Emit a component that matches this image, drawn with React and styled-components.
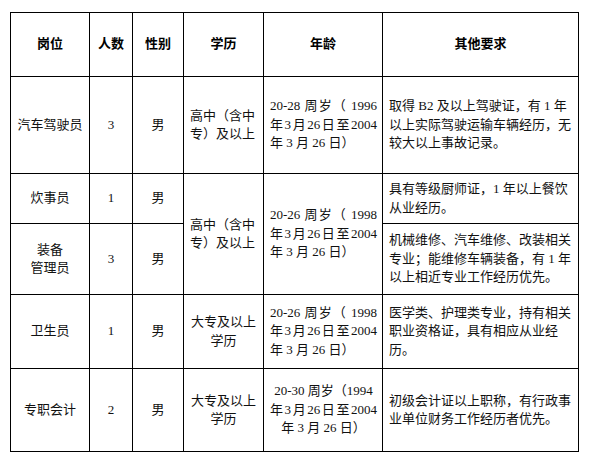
import React from "react";
import styled, { createGlobalStyle } from "styled-components";

const GlobalStyle = createGlobalStyle`
  html, body {
    margin: 0;
    padding: 0;
    background: #fff;
  }
  body {
    font-family: "Liberation Serif", "Noto Sans CJK SC", serif;
    color: #111;
  }
`;

const Page = styled.div`
  padding: 12px 0 0 10px;
`;

const Table = styled.table`
  border-collapse: collapse;
  table-layout: fixed;
  width: 569px;
  font-size: 13px;
  line-height: 18.5px;
`;

const Row = styled.tr`
  height: ${(p) => p.$h}px;
`;

const Head = styled.th`
  border: 1px solid #000;
  font-weight: bold;
  text-align: center;
  vertical-align: middle;
  padding: 0;
  color: #000;
`;

const Cell = styled.td`
  border: 1px solid #000;
  vertical-align: middle;
  text-align: ${(p) => p.$align || "center"};
  padding: 0 ${(p) => (p.$align === "left" ? "6px" : "2px")};
  white-space: nowrap;
`;

const AgeCell = styled(Cell)`
  padding: 0 5px 0 6px;
`;

const Line = styled.span`
  display: block;
  text-align: ${(p) => (p.$just ? "justify" : "inherit")};
  text-align-last: ${(p) => (p.$just ? "justify" : "auto")};
`;

const cols = [79, 43, 51, 80, 119, 196];

function Lines({ items, just = [] }) {
  return items.map((t, i) => (
    <Line key={i} $just={just.includes(i)}>
      {t}
    </Line>
  ));
}

function Age({ from, born, center, rowSpan }) {
  return (
    <AgeCell $align={center ? "center" : "left"} rowSpan={rowSpan}>
      <Lines
        items={[`20-${from} 周岁（${center ? "" : " "}${born}`, "年3月26日至2004", "年 3 月 26 日）"]}
        just={center ? [1] : [0, 1]}
      />
    </AgeCell>
  );
}

export default function App() {
  return (
    <Page>
      <GlobalStyle />
      <Table>
        <colgroup>
          {cols.map((w, i) => (
            <col key={i} style={{ width: w }} />
          ))}
        </colgroup>
        <tbody>
          <Row $h={64}>
            <Head>岗位</Head>
            <Head>人数</Head>
            <Head>性别</Head>
            <Head>学历</Head>
            <Head>年龄</Head>
            <Head>其他要求</Head>
          </Row>
          <Row $h={97}>
            <Cell>汽车驾驶员</Cell>
            <Cell>3</Cell>
            <Cell>男</Cell>
            <Cell $align="left">
              <Lines items={["高中（含中", "专）及以上"]} />
            </Cell>
            <Age from="28" born="1996" />
            <Cell $align="left">
              <Lines
                items={[
                  "取得 B2 及以上驾驶证，有 1 年",
                  "以上实际驾驶运输车辆经历，无",
                  "较大以上事故记录。",
                ]}
              />
            </Cell>
          </Row>
          <Row $h={50}>
            <Cell>炊事员</Cell>
            <Cell>1</Cell>
            <Cell>男</Cell>
            <Cell $align="left" rowSpan={2}>
              <Lines items={["高中（含中", "专）及以上"]} />
            </Cell>
            <Age from="26" born="1998" rowSpan={2} />
            <Cell $align="left">
              <Lines items={["具有等级厨师证，1 年以上餐饮", "从业经历。"]} />
            </Cell>
          </Row>
          <Row $h={71}>
            <Cell>
              <Lines items={["装备", "管理员"]} />
            </Cell>
            <Cell>3</Cell>
            <Cell>男</Cell>
            <Cell $align="left">
              <Lines
                items={[
                  "机械维修、汽车维修、改装相关",
                  "专业；能维修车辆装备，有 1 年",
                  "以上相近专业工作经历优先。",
                ]}
              />
            </Cell>
          </Row>
          <Row $h={74}>
            <Cell>卫生员</Cell>
            <Cell>1</Cell>
            <Cell>男</Cell>
            <Cell>
              <Lines items={["大专及以上", "学历"]} />
            </Cell>
            <Age from="26" born="1998" />
            <Cell $align="left">
              <Lines
                items={[
                  "医学类、护理类专业，持有相关",
                  "职业资格证，具有相应从业经",
                  "历。",
                ]}
              />
            </Cell>
          </Row>
          <Row $h={83}>
            <Cell>专职会计</Cell>
            <Cell>2</Cell>
            <Cell>男</Cell>
            <Cell>
              <Lines items={["大专及以上", "学历"]} />
            </Cell>
            <Age from="30" born="1994" center />
            <Cell $align="left">
              <Lines items={["初级会计证以上职称，有行政事", "业单位财务工作经历者优先。"]} />
            </Cell>
          </Row>
        </tbody>
      </Table>
    </Page>
  );
}
